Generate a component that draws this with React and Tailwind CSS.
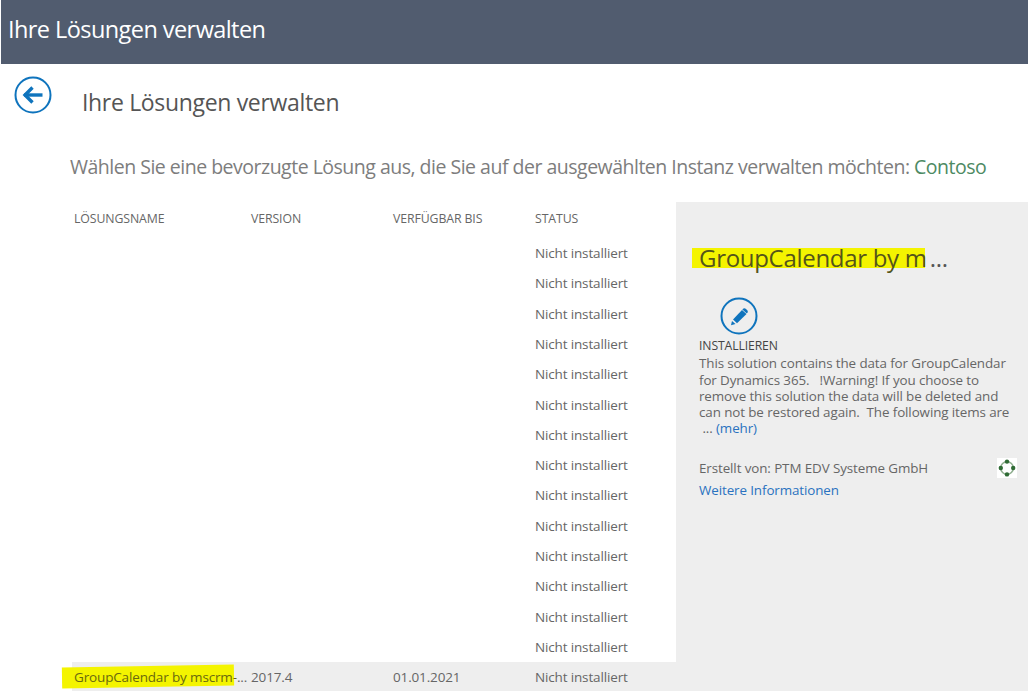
const COLS = "grid grid-cols-[177px_142px_142px_1fr] pl-[2px]";

function BackIcon() {
  return (
    <svg width="38" height="38" viewBox="0 0 38 38" fill="none">
      <circle cx="19" cy="19" r="17.5" stroke="#0f74bd" strokeWidth="2" />
      <path d="M10 19H28.5" stroke="#0f74bd" strokeWidth="3.4" />
      <path d="M18.5 11.5L11 19L18.5 26.5" stroke="#0f74bd" strokeWidth="3.4" />
    </svg>
  );
}

function EditIcon() {
  return (
    <svg width="38" height="38" viewBox="0 0 38 38" fill="none">
      <circle cx="19" cy="19" r="17.5" stroke="#0f74bd" strokeWidth="2" />
      <path d="M13 22.5L22 13L26.5 17L17 26.3Z" fill="#0f74bd" />
      <path d="M23 11.8C23.8 11 24.9 11 25.7 11.7L27.3 13.3C28 14.1 28 15.1 27.3 15.9L26.5 16.3L22.4 12.4Z" fill="#0f74bd" />
      <path d="M12 24L15.5 27.1L11 28.2Z" fill="#0f74bd" />
    </svg>
  );
}

function PublisherIcon() {
  return (
    <svg width="20" height="20" viewBox="0 0 20 20" className="bg-white">
      <circle cx="10" cy="10" r="6.3" fill="none" stroke="#8fae8f" strokeWidth="1.5" />
      <circle cx="10" cy="3.6" r="2.2" fill="#2f6b35" />
      <circle cx="10" cy="16.4" r="2.2" fill="#2f6b35" />
      <circle cx="3.8" cy="10" r="2.2" fill="#2f6b35" />
      <circle cx="16.2" cy="10" r="2.2" fill="#2f6b35" />
    </svg>
  );
}

export default function App() {
  return (
    <div className="w-[1031px] h-[691px] overflow-hidden bg-white flex flex-col pl-px pr-[3px] text-[#666666] font-['Open_Sans','Noto_Sans',sans-serif]">
      <header className="h-16 shrink-0 bg-[#515c6f] flex items-center pl-[7px] pb-[4px] text-white text-[23.5px] tracking-[-0.57px]">
        Ihre Lösungen verwalten
      </header>
      <div className="flex items-start pl-[13px] pt-[12px] h-[64px] shrink-0">
        <BackIcon />
        <h1 className="ml-[30px] mt-[11px] text-[23px] leading-[30px] text-[#555555] tracking-[-0.33px]">Ihre Lösungen verwalten</h1>
      </div>
      <p className="pl-[69px] pt-[24px] h-[74px] shrink-0 text-[19.5px] leading-[30px] text-[#7d7d7d] tracking-[-0.5px]">
        Wählen Sie eine bevorzugte Lösung aus, die Sie auf der ausgewählten Instanz verwalten möchten: <span className="text-[#4d8a63]">Contoso</span>
      </p>
      <div className="flex flex-1 min-h-0">
        <div className="w-[604px] ml-[71px] text-[13.5px] tracking-[-0.15px]">
          <div className={`${COLS} h-[36px] pb-[2px] items-center text-[12.3px] text-[#666] tracking-[-0.1px]`}>
            <div>LÖSUNGSNAME</div>
            <div>VERSION</div>
            <div>VERFÜGBAR BIS</div>
            <div>STATUS</div>
          </div>
          {Array.from({ length: 14 }).map((_, i) => (
            <div key={i} className={`${COLS} h-[30.3px] items-center`}>
              <div className="col-start-4">Nicht installiert</div>
            </div>
          ))}
          <div className={`${COLS} h-[30px] items-center bg-[#eeeeee]`}>
            <div className="relative whitespace-nowrap">
              <span className="absolute -left-[12px] top-[-1px] w-[172px] h-[21px] -rotate-1 bg-[#f4f400]" />
              <span className="relative text-[#69690f]">GroupCalendar by mscrm-</span><span className="relative">...</span>
            </div>
            <div>2017.4</div>
            <div>01.01.2021</div>
            <div>Nicht installiert</div>
          </div>
        </div>
        <aside className="flex-1 bg-[#eeeeee] pl-[23px] pt-[41px] text-[13.4px] leading-[16.3px] tracking-[-0.1px]">
          <div className="relative h-[30px] text-[24px] leading-[30px] text-[#555555] tracking-[-0.3px] whitespace-nowrap">
            <span className="absolute -left-[7px] top-[5px] w-[233px] h-[20px] bg-[#f4f400]" />
            <span className="relative text-[#54541a]">GroupCalendar by m</span><span className="relative ml-[3px]">...</span>
          </div>
          <div className="mt-[24px] ml-[21px] h-[38px]">
            <EditIcon />
          </div>
          <div className="mt-[3px] text-[12.2px] text-[#444]">INSTALLIEREN</div>
          <div className="mt-[1px] whitespace-nowrap">
            <div>This solution contains the data for GroupCalendar</div>
            <div>for Dynamics 365. &nbsp;&nbsp;!Warning! If you choose to</div>
            <div>remove this solution the data will be deleted and</div>
            <div>can not be restored again. &nbsp;The following items are</div>
            <div>&nbsp;... <a className="text-[#2a72c0]">(mehr)</a></div>
          </div>
          <div className="mt-[21px] flex items-center justify-between w-[318px] h-[20px]">
            <span>Erstellt von: PTM EDV Systeme GmbH</span>
            <PublisherIcon />
          </div>
          <a className="block mt-[4px] text-[#2a72c0]">Weitere Informationen</a>
        </aside>
      </div>
    </div>
  );
}
